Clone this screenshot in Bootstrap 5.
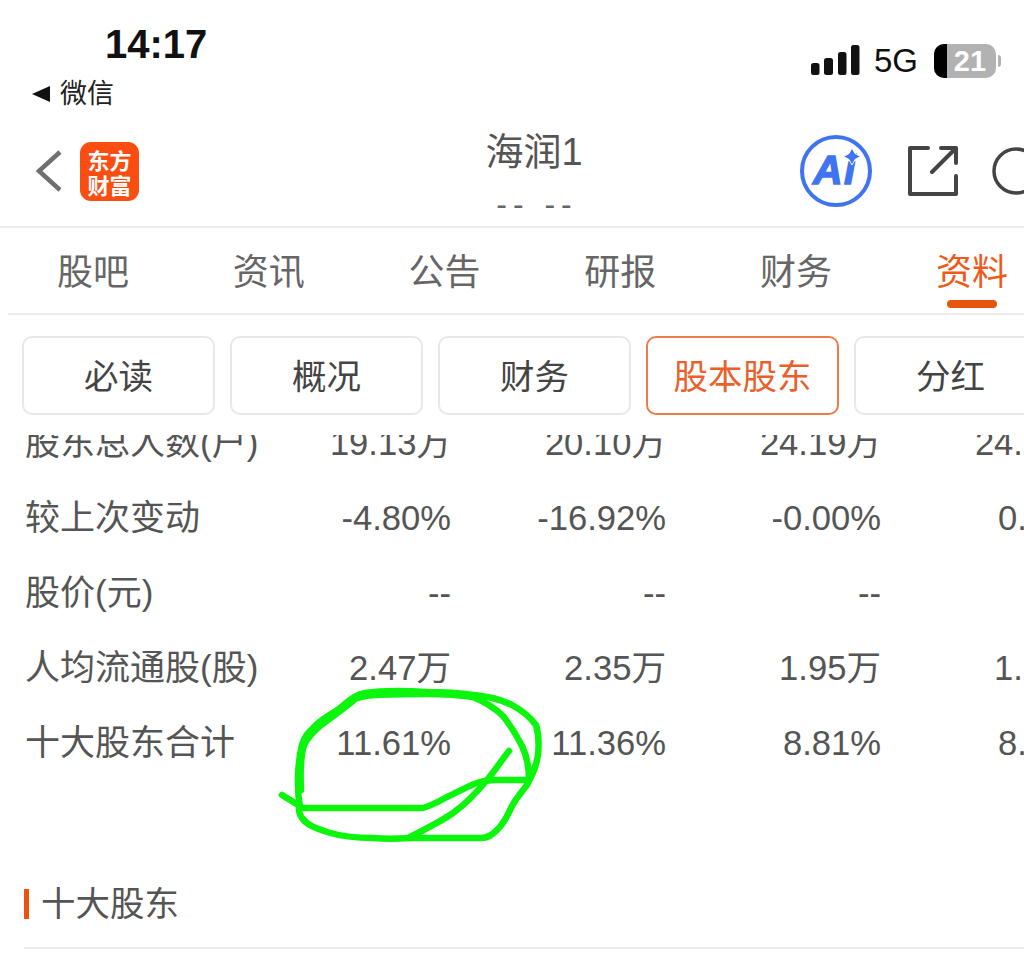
<!DOCTYPE html>
<html lang="zh-CN">
<head>
<meta charset="utf-8">
<title>海润1</title>
<link rel="stylesheet" href="https://cdn.jsdelivr.net/npm/bootstrap@5.3.0/dist/css/bootstrap.min.css">
<style>
html,body{overflow:hidden;height:959px;}
body{width:1024px;position:relative;background:#fff;color:#555;font-family:"Liberation Sans","Noto Sans CJK SC",sans-serif;}
.status-bar{height:122px;color:#111;}
.status-left{width:400px;}
.clock{font-size:40px;font-weight:700;line-height:46px;padding:21px 0 0 105px;}
.back-app{font-size:27px;line-height:32px;padding:11px 0 0 32px;gap:10px;color:#222;}
.status-right{padding:44px 23px 0 0;gap:14px;}
.net{font-size:33px;line-height:34px;color:#111;}
.batt-wrap{gap:2px;margin-left:2px;}
.batt{width:62px;height:34px;border-radius:10px;background:#b2b2b2;position:relative;overflow:hidden;color:#fff;font-weight:700;font-size:29px;line-height:34px;text-align:center;padding-left:10px;}
.batt::before{content:"";position:absolute;left:0;top:0;bottom:0;width:13px;background:#000;}
.batt-nub{width:3px;height:12px;border-radius:0 3px 3px 0;background:#b2b2b2;}
.app-head{height:106px;border-bottom:2px solid #ececec;}
.head-left{width:484px;padding-left:35px;gap:17px;margin-top:-6px;}
.app-logo{width:59px;height:59px;border-radius:11px;background:#fa4d12;color:#fff;font-family:"Noto Sans CJK SC",sans-serif;font-weight:700;font-size:22px;line-height:25px;text-align:center;padding-top:5px;}
.head-title{width:100px;text-align:center;font-size:38px;line-height:44px;padding-top:8px;white-space:nowrap;}
.head-title .dash{font-size:32px;line-height:40px;padding-top:10px;color:#666;letter-spacing:6px;padding-left:6px;}
.head-icons{margin-left:215px;gap:34.5px;margin-top:-6px;}
.tab-strip{height:87px;border-bottom:2px solid #ececec;margin-left:8px;}
.tab-item{flex:0 0 175.8px;text-align:center;font-size:36px;line-height:90px;color:#666;position:relative;}
.tab-item:first-child{margin-left:-3px;}
.tab-on{color:#ef5a1a;}
.tab-on::after{content:"";position:absolute;left:50%;margin-left:-25px;bottom:5px;width:50px;height:8px;border-radius:4px;background:#e8540f;}
.sub-strip{padding:21px 0 20px 22px;gap:15px;}
.sub-btn{flex:0 0 193px;height:79px;font-size:34.5px;line-height:1;display:flex;align-items:center;justify-content:center;background:#fff;border:2px solid #e8e8e8;border-radius:10px;color:#444;padding:3px 0 0;}
.sub-on{color:#e9602a;border-color:#ec7c4c;}
.data-clip{height:345px;overflow:hidden;}
.data-tb{width:1096px;margin-top:-29px;table-layout:fixed;border-collapse:collapse;}
.data-tb td{height:75px;padding:0;font-size:34.6px;text-align:right;color:#555;vertical-align:middle;white-space:nowrap;}
.data-tb td:first-child{text-align:left;padding-left:25px;width:236px;font-size:35px;}
.data-tb td:not(:first-child){width:215px;}
.sec-head{margin-top:104px;padding-left:24px;gap:12px;font-size:34.5px;line-height:40px;}
.sec-bar{width:5px;height:30px;background:#e8540f;}
.sec-line{margin:23px 0 0 24px;border-bottom:2px solid #ececec;}
.scribble{position:absolute;left:0;top:0;pointer-events:none;}
</style>
</head>
<body>
<div class="status-bar d-flex justify-content-between">
  <div class="status-left">
    <div class="clock">14:17</div>
    <div class="back-app d-flex align-items-center">
      <svg width="18" height="16" viewBox="0 0 18 16"><path d="M0 8 18 0V16Z" fill="#111"/></svg>
      <span>微信</span>
    </div>
  </div>
  <div class="status-right d-flex align-items-start">
    <svg width="49" height="32" viewBox="0 0 49 32" fill="#111"><rect x="0" y="19" width="8.500" height="12" rx="2.500"/><rect x="13" y="14" width="9" height="17" rx="2.500"/><rect x="27" y="8" width="8.500" height="23" rx="2.500"/><rect x="40" y="1" width="8.500" height="30" rx="2.500"/></svg>
    <span class="net">5G</span>
    <div class="batt-wrap d-flex align-items-center">
      <div class="batt">21</div>
      <span class="batt-nub"></span>
    </div>
  </div>
</div>

<div class="app-head d-flex align-items-center">
  <div class="head-left d-flex align-items-center flex-shrink-0">
    <svg width="28" height="44" viewBox="0 0 28 44"><path d="M25 3 4 22 25 41" fill="none" stroke="#6f6f6f" stroke-width="4.500"/></svg>
    <div class="app-logo">东方<br>财富</div>
  </div>
  <div class="head-title align-self-start flex-shrink-0">
    <div>海润1</div>
    <div class="dash">-- --</div>
  </div>
  <div class="head-icons d-flex align-items-center flex-shrink-0">
    <svg width="74" height="74" viewBox="0 0 74 74" class="flex-shrink-0">
      <circle cx="37" cy="37" r="34" fill="none" stroke="#3f74f0" stroke-width="4"/>
      <text x="14" y="50" font-family="Liberation Sans" font-weight="700" font-style="italic" font-size="41" letter-spacing="1.500" fill="#3f74f0" stroke="#3f74f0" stroke-width="1.400">Ai</text>
      <path d="M53 14l3 5.500 5.500 3-5.500 3-3 5.500-3-5.500-5.500-3 5.500-3z" fill="#3f74f0" stroke="#fff" stroke-width="1"/>
    </svg>
    <svg width="50" height="50" viewBox="0 0 50 50" fill="none" stroke="#444" stroke-width="4" stroke-linecap="round" stroke-linejoin="round" class="flex-shrink-0">
      <path d="M20 2H2V48H48V30"/>
      <path d="M24 26 48 2M33 2H48V17"/>
    </svg>
    <svg width="48" height="48" viewBox="0 0 48 48" class="flex-shrink-0"><circle cx="24" cy="24" r="22" fill="none" stroke="#444" stroke-width="3.500"/></svg>
  </div>
</div>

<div class="tab-strip d-flex flex-nowrap overflow-hidden">
  <div class="tab-item">股吧</div>
  <div class="tab-item">资讯</div>
  <div class="tab-item">公告</div>
  <div class="tab-item">研报</div>
  <div class="tab-item">财务</div>
  <div class="tab-item tab-on">资料</div>
</div>

<div class="sub-strip d-flex flex-nowrap overflow-hidden">
  <button type="button" class="btn sub-btn">必读</button>
  <button type="button" class="btn sub-btn">概况</button>
  <button type="button" class="btn sub-btn">财务</button>
  <button type="button" class="btn sub-btn sub-on">股本股东</button>
  <button type="button" class="btn sub-btn">分红</button>
</div>

<div class="data-clip">
  <table class="data-tb">
    <tr><td>股东总人数(户)</td><td>19.13万</td><td>20.10万</td><td>24.19万</td><td>24.19万</td></tr>
    <tr><td>较上次变动</td><td>-4.80%</td><td>-16.92%</td><td>-0.00%</td><td>0.00%</td></tr>
    <tr><td>股价(元)</td><td>--</td><td>--</td><td>--</td><td>--</td></tr>
    <tr><td>人均流通股(股)</td><td>2.47万</td><td>2.35万</td><td>1.95万</td><td>1.95万</td></tr>
    <tr><td>十大股东合计</td><td>11.61%</td><td>11.36%</td><td>8.81%</td><td>8.81%</td></tr>
  </table>
</div>

<div class="sec-head d-flex align-items-center"><span class="sec-bar"></span><span>十大股东</span></div>
<div class="sec-line"></div>

<svg class="scribble" width="1024" height="959" viewBox="0 0 1024 959" fill="none" stroke="#0cf50c" stroke-width="6.500" stroke-linecap="round" stroke-linejoin="round">
  <path d="M300 808C297 790 297 765 302 745C305 735 310 731 316 725C325 717 332 714 340 708C350 700 355 695 365 693C385 690 410 691 427 692C445 692 460 693 473 695C490 697 500 699 512 705C523 711 530 717 536 725C539 735 539 745 538 755C536 768 532 775 527 785C520 794 515 800 511 808C507 817 503 824 497 830C492 835 488 838 481 838H410C395 839 385 839 373 838C355 838 340 836 327 832C315 828 307 825 302 818C299 814 298 808 300 808"/>
  <path d="M301 790C300 770 301 755 304 745C308 737 314 731 320 726C330 718 345 708 355 699C362 695 380 694 427 694C445 694 460 695 473 697"/>
  <path d="M473 697C485 702 495 708 503 716C511 726 517 736 522 746C527 756 529 768 529 780H493C485 781 482 781 477 783C468 786 458 792 447 797C438 802 430 806 423 808H303L282 795"/>
  <path d="M509 751C503 758 497 768 487 780C477 792 466 804 453 813C440 822 424 830 410 837"/>
</svg>
</body>
</html>
